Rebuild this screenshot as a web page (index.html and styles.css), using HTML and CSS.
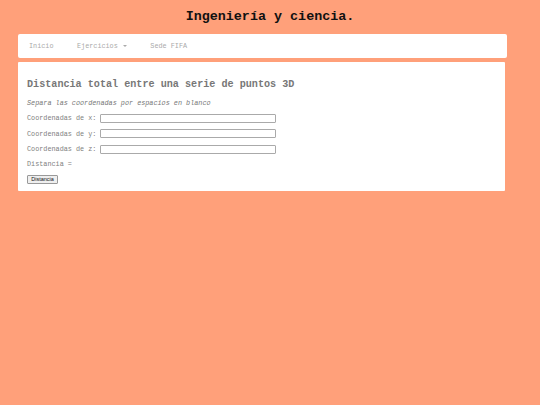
FILE: index.html
```html
<!DOCTYPE html>
<html lang="es">
<head>
<meta charset="utf-8">
<title>Ingeniería y ciencia.</title>
<link rel="stylesheet" href="styles.css">
</head>
<body>
<h1 class="site-title">Ingeniería y ciencia.</h1>
<nav class="navbar">
  <a class="nav-link" href="#">Inicio</a>
  <a class="nav-link" href="#">Ejercicios <span class="caret"></span></a>
  <a class="nav-link" href="#">Sede FIFA</a>
</nav>
<main class="panel">
  <h2 class="panel-title">Distancia total entre una serie de puntos 3D</h2>
  <p class="hint">Separa las coordenadas por espacios en blanco</p>
  <div class="field field-first"><label class="field-label">Coordenadas de x:</label><input class="field-input" type="text"></div>
  <div class="field"><label class="field-label">Coordenadas de y:</label><input class="field-input" type="text"></div>
  <div class="field"><label class="field-label">Coordenadas de z:</label><input class="field-input" type="text"></div>
  <p class="result">Distancia =</p>
  <button class="btn" type="button">Distancia</button>
</main>
</body>
</html>
```
FILE: styles.css
```css
html, body {
  margin: 0;
  padding: 0;
}
body {
  background: #ffa07a;
  font-family: "Liberation Mono", "DejaVu Sans Mono", monospace;
  color: #777;
}
.site-title {
  margin: 0;
  padding-top: 9px;
  height: 34px;
  box-sizing: border-box;
  text-align: center;
  font-size: 13.4px;
  line-height: 16px;
  font-weight: bold;
  color: #111;
}
.navbar {
  margin-left: 18px;
  width: 489px;
  height: 24px;
  background: #fff;
  border-radius: 2px;
  display: flex;
  align-items: center;
  padding-left: 11px;
  box-sizing: border-box;
  gap: 23.5px;
}
.nav-link {
  font-size: 6.8px;
  color: #aaa;
  text-decoration: none;
  line-height: 8px;
}
.caret {
  display: inline-block;
  width: 0;
  height: 0;
  border-left: 2px solid transparent;
  border-right: 2px solid transparent;
  border-top: 2px solid #aaa;
  vertical-align: middle;
  margin-left: 1px;
}
.panel {
  display: block;
  margin-top: 4px;
  margin-left: 18px;
  width: 487px;
  height: 129px;
  box-sizing: border-box;
  background: #fff;
  border-radius: 1px;
  padding: 17px 9px 0;
}
.panel-title {
  margin: 0;
  font-size: 10.15px;
  line-height: 12px;
  font-weight: bold;
  color: #777;
}
.hint {
  margin: 8px 0 0;
  font-size: 6.8px;
  line-height: 8px;
  font-style: italic;
  color: #777;
}
.field {
  display: flex;
  align-items: center;
  height: 10px;
  margin-top: 5.5px;
}
.field-first {
  margin-top: 6px;
}
.field-label {
  font-size: 6.8px;
  line-height: 8px;
  color: #808080;
  margin-right: 4px;
}
.field-input {
  width: 176px;
  height: 9px;
  box-sizing: border-box;
  border: 1px solid #aaa;
  border-radius: 1px;
  padding: 0;
  margin: 0;
  background: #fff;
}
.result {
  margin: 6px 0 0;
  font-size: 6.8px;
  line-height: 8px;
  color: #808080;
}
.btn {
  display: block;
  margin-top: 7px;
  width: 31px;
  height: 9px;
  box-sizing: border-box;
  padding: 0;
  font-family: "Liberation Sans", Arial, sans-serif;
  font-size: 5.5px;
  line-height: 7px;
  color: #111;
  background: #efefef;
  border: 1px solid #999;
  border-radius: 1px;
}
```
